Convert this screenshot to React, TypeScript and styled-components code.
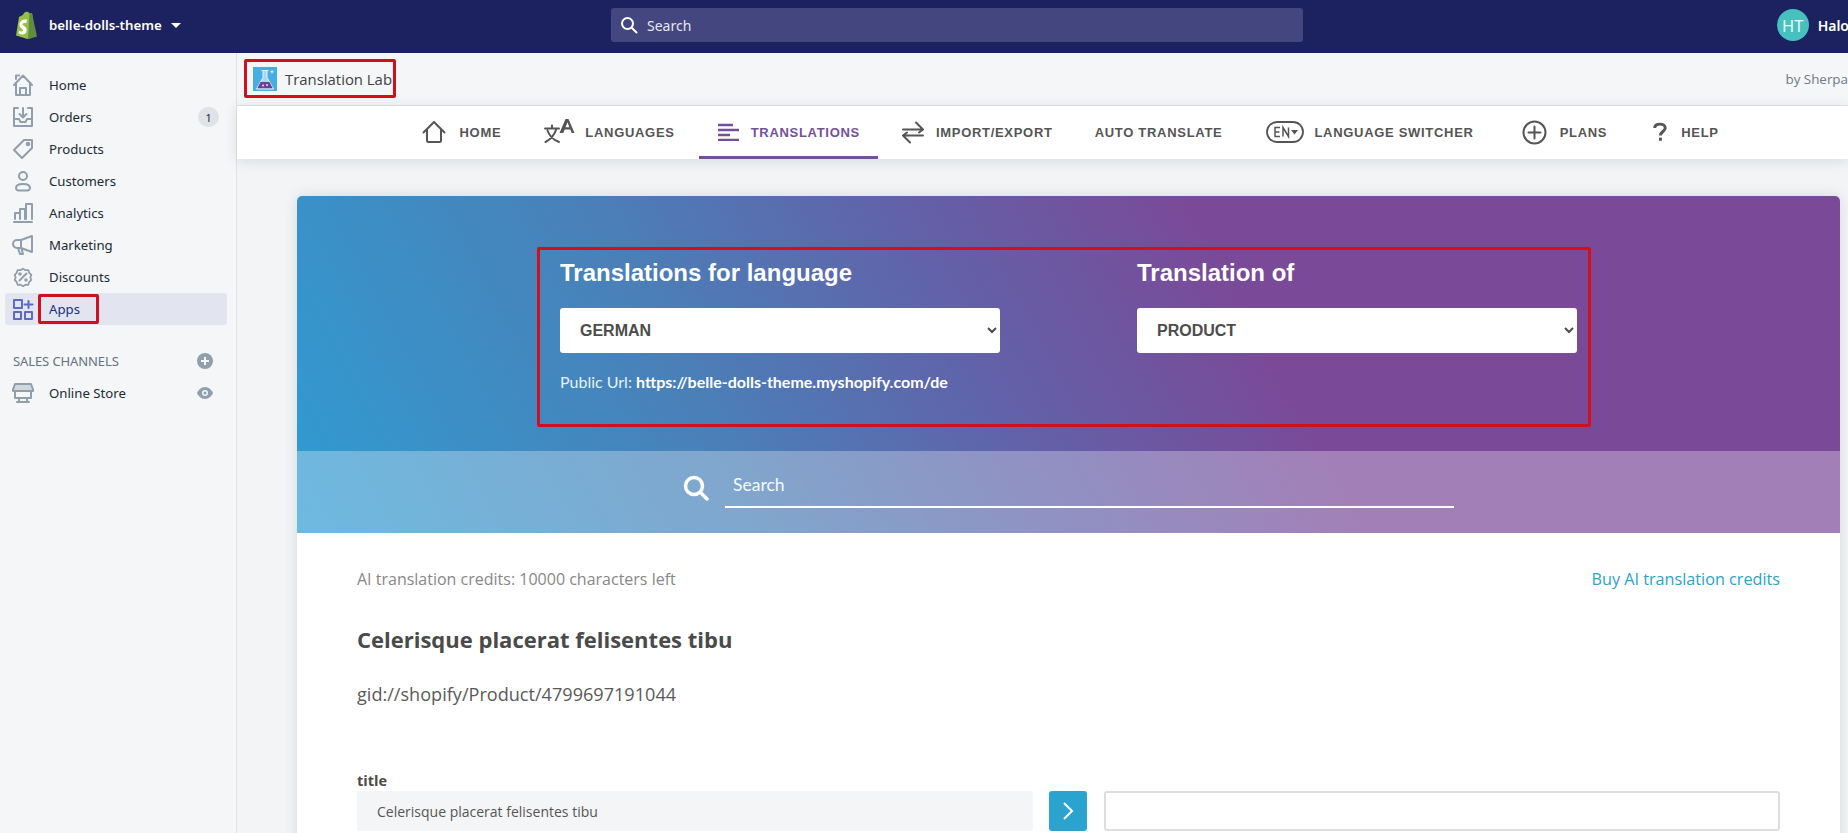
import React from 'react'
import styled, { createGlobalStyle } from 'styled-components'

const GlobalStyle = createGlobalStyle`
  html, body {
    margin: 0;
    height: 100%;
    overflow: hidden;
    background: #f4f6f8;
    font-family: 'Noto Sans', 'Open Sans', Arial, sans-serif;
  }
  * { box-sizing: border-box; }
`

const Page = styled.div`
  width: 1848px;
  height: 833px;
  display: flex;
  flex-direction: column;
  overflow: hidden;
`

const TopBar = styled.header`
  flex: none;
  height: 53px;
  padding-bottom: 3px;
  background: #1c2260;
  display: grid;
  grid-template-columns: 611px 692px 1fr;
  align-items: center;
  color: #fff;
`

const StoreSwitcher = styled.div`
  display: flex;
  align-items: center;
  padding-left: 13px;
  font-size: 13.3px;
  font-weight: 600;
`

const StoreName = styled.span`
  margin-left: 11px;
`

const Caret = styled.span`
  margin-left: 9px;
  width: 0;
  height: 0;
  border-left: 5px solid transparent;
  border-right: 5px solid transparent;
  border-top: 5px solid #fff;
`

const TopSearch = styled.div`
  height: 34px;
  background: #43467f;
  border-radius: 3px;
  display: flex;
  align-items: center;
  padding-left: 9px;
  gap: 7px;
  color: #fff;
`

const TopSearchInput = styled.input`
  flex: 1;
  background: transparent;
  border: 0;
  outline: 0;
  color: #fff;
  font: 14px 'Noto Sans', sans-serif;
  &::placeholder { color: #e6e7f0; opacity: 1; }
`

const Account = styled.div`
  display: flex;
  align-items: center;
  justify-content: flex-end;
  gap: 9px;
  font-size: 14px;
  font-weight: 600;
  margin-right: -1px;
`

const Avatar = styled.div`
  width: 32px;
  height: 32px;
  border-radius: 50%;
  background: #47c1bf;
  color: #e8fbfa;
  display: flex;
  align-items: center;
  justify-content: center;
  font-size: 16.5px;
  font-weight: 400;
`

const Body = styled.div`
  flex: 1;
  display: flex;
  min-height: 0;
`

const Sidebar = styled.aside`
  flex: none;
  width: 237px;
  border-right: 1px solid #dfe3e8;
  background: #f4f6f8;
  padding: 16px 9px 0 5px;
`

const NavRow = styled.div<{ $active?: boolean }>`
  height: 32px;
  display: flex;
  align-items: center;
  padding-left: 7px;
  border-radius: 3px;
  font-size: 13.2px;
  color: ${({ $active }) => ($active ? '#202e78' : '#212b36')};
  background: ${({ $active }) => ($active ? '#e2e5f0' : 'transparent')};
  svg { flex: none; color: ${({ $active }) => ($active ? '#5c6ac4' : '#919eab')}; }
`

const NavLabel = styled.span`
  margin-left: 15px;
  flex: 1;
`

const Badge = styled.span`
  width: 21px;
  height: 20px;
  margin-right: 8px;
  border-radius: 10px;
  background: #dfe3e8;
  font-size: 11.5px;
  display: flex;
  align-items: center;
  justify-content: center;
`

const ChannelsHeading = styled.div`
  height: 32px;
  margin-top: 20px;
  padding: 0 14px 0 8px;
  display: flex;
  align-items: center;
  justify-content: space-between;
  font-size: 13px;
  letter-spacing: -0.1px;
  color: #637381;
  svg { color: #919eab; }
`

const RowEnd = styled.span`
  margin-right: 14px;
  display: flex;
  svg { color: #919eab; }
`

const Main = styled.main`
  flex: 1;
  min-width: 0;
  display: flex;
  flex-direction: column;
  background: #f2f4f6;
`

const AppTitleBar = styled.div`
  flex: none;
  height: 53px;
  background: #f4f6f8;
  border-bottom: 1px solid #dfe3e8;
  display: flex;
  align-items: center;
  justify-content: space-between;
  padding-left: 16px;
  font-family: 'Open Sans', sans-serif;
`

const AppName = styled.div`
  display: flex;
  align-items: center;
  gap: 8px;
  font-size: 14.9px;
  color: #3d4349;
`

const ByLine = styled.div`
  font-size: 13.4px;
  color: #6f7a85;
  margin-bottom: 1px;
`

const TabBar = styled.nav`
  flex: none;
  height: 53px;
  background: #fff;
  display: flex;
  align-items: stretch;
  gap: 5px;
  padding-left: 165px;
  box-shadow: 0 2px 12px rgba(60, 70, 80, 0.14);
  position: relative;
`

const Tab = styled.div<{ $active?: boolean; $gap?: number; $lead?: number }>`
  display: flex;
  align-items: center;
  gap: ${({ $gap }) => $gap ?? 12}px;
  margin-left: ${({ $lead }) => $lead ?? 0}px;
  padding: 2px 18.5px 0;
  font-family: 'Liberation Sans', Arial, sans-serif;
  font-size: 13px;
  font-weight: 700;
  letter-spacing: 0.7px;
  white-space: nowrap;
  color: ${({ $active }) => ($active ? '#73519a' : '#555')};
  border-bottom: 3px solid ${({ $active }) => ($active ? '#73519a' : 'transparent')};
`

const Scroll = styled.div`
  flex: 1;
  min-height: 0;
  padding: 37px 8px 0 60px;
  overflow: hidden;
`

const Card = styled.section`
  background: #fff;
  border-radius: 5px 5px 0 0;
  box-shadow: 0 0 14px rgba(60, 70, 80, 0.14);
  height: 700px;
  overflow: hidden;
`

const Banner = styled.div`
  background: linear-gradient(62deg, #2f9cd2 0%, #4a80b8 27%, #6360a8 46%, #7a4a98 62%, #7a4a98 100%);
`

const Hero = styled.div`
  height: 255px;
  padding-top: 61px;
  display: flex;
  justify-content: center;
`

const HeroGrid = styled.div`
  width: 1017px;
  display: grid;
  grid-template-columns: 440px 440px;
  justify-content: space-between;
  align-content: start;
`

const HeroField = styled.div`
  display: flex;
  flex-direction: column;
`

const HeroLabel = styled.h2`
  margin: 0 0 19px;
  font: 700 24px/32px 'Liberation Sans', Arial, sans-serif;
  color: #fff;
`

const HeroSelect = styled.select`
  height: 45px;
  width: 100%;
  border: 0;
  border-radius: 3px;
  background: #fff;
  padding-left: 16px;
  font: 700 16px 'Liberation Sans', Arial, sans-serif;
  color: #4c4c4c;
`

const PublicUrl = styled.p`
  margin: 19px 0 0;
  font: 16px/20px Lato, sans-serif;
  color: #e4f1fa;
  strong { color: #fff; font-weight: 700; }
`

const SearchStrip = styled.div`
  height: 82px;
  background: rgba(255, 255, 255, 0.3);
  display: flex;
  justify-content: center;
  padding-top: 17px;
`

const SearchGroup = styled.div`
  width: 771px;
  display: flex;
  align-items: flex-start;
  gap: 16px;
  color: #fff;
  svg { margin-top: 7px; flex: none; }
`

const SearchField = styled.input`
  flex: 1;
  height: 40px;
  background: transparent;
  border: 0;
  border-bottom: 2px solid #fff;
  outline: 0;
  padding: 0 8px 6px;
  color: #fff;
  font: 17.5px Lato, sans-serif;
  &::placeholder { color: #f4f9fc; opacity: 1; }
`

const CardBody = styled.div`
  padding: 35px 60px 0;
  font-family: 'Open Sans', sans-serif;
`

const CreditsRow = styled.div`
  display: flex;
  justify-content: space-between;
  align-items: center;
  height: 22px;
  font-size: 16px;
  color: #888;
`

const BuyLink = styled.a`
  font-size: 16.2px;
  color: #2ba3c9;
`

const ProductTitle = styled.h3`
  margin: 34px 0 0;
  font-size: 22px;
  line-height: 30px;
  font-weight: 700;
  color: #4a4a4a;
`

const ProductId = styled.div`
  margin-top: 28px;
  font-size: 18.1px;
  line-height: 24px;
  color: #5a5a5a;
`

const FieldLabel = styled.div`
  margin-top: 65px;
  font-size: 14.5px;
  line-height: 20px;
  font-weight: 700;
  color: #4a4a4a;
`

const FieldRow = styled.div`
  display: grid;
  grid-template-columns: 676px 38px 1fr;
  column-gap: 16px;
  align-items: stretch;
  height: 40px;
`

const SourceBox = styled.div`
  background: #f4f5f7;
  border-radius: 3px;
  padding-left: 20px;
  display: flex;
  align-items: center;
  font-size: 14px;
  color: #555;
`

const CopyButton = styled.button`
  border: 0;
  border-radius: 3px;
  background: #2ba3cf;
  color: #fff;
  padding: 0;
  display: flex;
  align-items: center;
  justify-content: center;
`

const TargetInput = styled.input`
  margin-left: 1px;
  border: 2px solid #dedede;
  border-radius: 3px;
  background: #fff;
  outline: 0;
`

type BoxProps = { $x: number; $y: number; $w: number; $h: number }

const Annotation = styled.div<BoxProps>`
  position: absolute;
  border: 3px solid #d0101c;
  border-radius: 2px;
  pointer-events: none;
  z-index: 5;
  left: ${({ $x }) => $x}px;
  top: ${({ $y }) => $y}px;
  width: ${({ $w }) => $w}px;
  height: ${({ $h }) => $h}px;
`

const line = { fill: 'none', stroke: 'currentColor', strokeWidth: 2, strokeLinecap: 'round', strokeLinejoin: 'round' } as const

const ShopifyLogo = () => (
  <svg width="25" height="29" viewBox="0 0 25 29">
    <path d="M3 24.5 6 6c2-1 3-1.600 4-2.200C11 1.500 12.500 .5 14 .8c1.200.2 2 .9 2.500 1.600l2.500-.2L22.500 25l-8 3z" fill="#95bf47" />
    <path d="M16.500 2.400 19 2.200 24 25.500l-9 2.700z" fill="#5e8e3e" />
    <path d="M14 9.600l-.8 2.700s-1-.5-2.100-.4c-1.700.1-1.700 1.100-1.700 1.400.1 1.500 4.100 1.800 4.300 5.300.2 2.800-1.500 4.700-3.800 4.800-2.800.2-4.400-1.500-4.400-1.500l.6-2.500s1.500 1.200 2.800 1.100c.8 0 1.100-.7 1.100-1.200-.1-2-3.400-1.900-3.600-5.100-.2-2.700 1.600-5.500 5.500-5.700 1.400-.1 2.100.1 2.100.1z" fill="#fff" />
  </svg>
)

const LabLogo = () => (
  <svg width="24" height="24" viewBox="0 0 24 24">
    <rect width="24" height="24" fill="#45aee2" />
    <path d="M8.500 3.500h7M10 3.500v7L3.500 22h17L14 10.500v-7" fill="#a9d6f0" stroke="#e8f4fb" strokeWidth="1" />
    <path d="M7.500 15h9l3.200 6.300H4.300z" fill="#6f3f97" />
    <path d="M19 3v3.500M17.300 4.800h3.400" stroke="#fff" strokeWidth="0.8" />
    <circle cx="10" cy="18.500" r="1" fill="#e8d8f0" />
    <circle cx="14" cy="18" r="1" fill="#e8d8f0" />
  </svg>
)

const SearchGlyph = () => (
  <svg width="18" height="18" viewBox="0 0 18 18" {...line}>
    <circle cx="7.500" cy="7.500" r="5.500" />
    <path d="M12 12l4.500 4.500" />
  </svg>
)

const HomeIcon = () => (
  <svg width="22" height="24" viewBox="0 0 22 24" {...line}>
    <path d="M2 12 11 2.500 20 12M4 10v12h14V10M8 22v-7h6v7M4 6V2.500h3" />
  </svg>
)
const OrdersIcon = () => (
  <svg width="22" height="22" viewBox="0 0 22 22" {...line}>
    <path d="M6 2H2v18h18V2h-4M2 13h5l1.500 3h5l1.500-3h5M11 2v9M7.500 8l3.500 3.500L14.500 8" />
  </svg>
)
const ProductsIcon = () => (
  <svg width="22" height="22" viewBox="0 0 22 22" {...line}>
    <path d="M2 12 12 2h8v8L10 20z" />
    <circle cx="16" cy="6" r="1.300" />
  </svg>
)
const CustomersIcon = () => (
  <svg width="22" height="22" viewBox="0 0 22 22" {...line}>
    <circle cx="11" cy="6" r="4" />
    <path d="M4 18c0-3 3-4 7-4s7 1 7 4-3 2.500-7 2.500-7 .5-7-2.500z" />
  </svg>
)
const AnalyticsIcon = () => (
  <svg width="22" height="22" viewBox="0 0 22 22" {...line}>
    <path d="M2 20h18M3 17v-6h5v6M8 17V7h5v10M14 17V2h6v15" />
  </svg>
)
const MarketingIcon = () => (
  <svg width="22" height="22" viewBox="0 0 22 22" {...line}>
    <path d="M20 2v16L9 14H5a3.500 3.500 0 0 1 0-8h4zM9 6v8M6 14l2 6h3l-1.500-5.500" />
  </svg>
)
const DiscountsIcon = () => (
  <svg width="22" height="22" viewBox="0 0 22 22" {...line}>
    <path d="M11 1.500l2.800 1.800 3.300-.2 1 3.200 2.400 2.300-1.200 2.900 1.200 2.900-2.400 2.300-1 3.200-3.300-.2-2.800 1.800-2.800-1.800-3.300.2-1-3.200-2.400-2.300 1.200-2.900-1.200-2.900 2.400-2.300 1-3.200 3.300.2z" transform="translate(1.300 1.300) scale(.88)" />
    <path d="M7.500 14.500l7-7" />
    <circle cx="8" cy="8" r=".8" />
    <circle cx="14" cy="14" r=".8" />
  </svg>
)
const AppsIcon = () => (
  <svg width="22" height="22" viewBox="0 0 22 22" {...line}>
    <path d="M2 2h8v8H2zM2 14h7v7H2zM13 14h7v7h-7zM16.500 3v7M12.500 6.500h8" />
  </svg>
)
const StoreIcon = () => (
  <svg width="22" height="22" viewBox="0 0 22 22" {...line}>
    <path d="M3 2h16l2 5.500v1.500H1V7.500zM3 9v7h16V9M7 16v4M15 16v4M5 20h12" />
    <path d="M3 2h16l2 6H1z" fill="currentColor" fillOpacity=".35" stroke="none" />
  </svg>
)
const PlusCircle = () => (
  <svg width="16" height="16" viewBox="0 0 16 16">
    <circle cx="8" cy="8" r="8" fill="currentColor" />
    <path d="M8 4v8M4 8h8" stroke="#f4f6f8" strokeWidth="2" />
  </svg>
)
const EyeIcon = () => (
  <svg width="16" height="12" viewBox="0 0 16 12">
    <path d="M8 0c4 0 7 3.500 8 6-1 2.500-4 6-8 6S1 8.500 0 6c1-2.500 4-6 8-6z" fill="currentColor" />
    <circle cx="8" cy="6" r="3" fill="#f4f6f8" />
    <circle cx="8" cy="6" r="1.500" fill="currentColor" />
  </svg>
)

const TabHome = () => (
  <svg width="24" height="24" viewBox="0 0 24 24" {...line}>
    <path d="M1.500 12.500 12 2l10.500 10.500M5 10v10.500a1.500 1.500 0 0 0 1.500 1.500h11a1.500 1.500 0 0 0 1.500-1.500V10" />
  </svg>
)
const TabLanguages = () => (
  <svg width="32" height="26" viewBox="0 0 32 26">
    <path d="M1 9.500h14M8 6.500v3M12.500 9.500C11 15 7 20 1.500 23M3.500 11.500C5.500 17 9.500 21 15 23" {...line} />
    <path d="M15.500 14 21.500 0h3l6 14h-2.800l-1.400-3.500h-5.600L19.300 14zM21.500 8.300h3.900L23.500 3.300z" fill="currentColor" />
  </svg>
)
const TabTranslations = () => (
  <svg width="21" height="18" viewBox="0 0 21 18" stroke="currentColor" strokeWidth="2.400">
    <path d="M0 2h15M0 7h21M0 12h12M0 17h21" />
  </svg>
)
const TabTransfer = () => (
  <svg width="22" height="23" viewBox="0 0 22 23" {...line}>
    <path d="M1 8.500h20M14 1.500l7 7-4 3M21 14.500H1M8 21.500l-7-7 4-3" />
  </svg>
)
const TabSwitcher = () => (
  <svg width="38" height="22" viewBox="0 0 38 22">
    <rect x="1" y="1" width="36" height="20" rx="10" fill="none" stroke="currentColor" strokeWidth="1.800" />
    <path d="M14 6.500H9v9h5M9 11h4.500M17 15.500v-9l5.500 9v-9" fill="none" stroke="currentColor" strokeWidth="1.500" />
    <path d="M25 9h7l-3.500 4.500z" fill="currentColor" />
  </svg>
)
const TabPlans = () => (
  <svg width="25" height="25" viewBox="0 0 25 25" {...line}>
    <circle cx="12.500" cy="12.500" r="11" />
    <path d="M12.500 6.500v12M6.500 12.500h12" />
  </svg>
)
const TabHelp = () => (
  <svg width="14" height="20" viewBox="0 0 16 22" fill="none" stroke="currentColor" strokeWidth="3.400">
    <path d="M2 6.500C2 3.500 4.500 2 8 2s6 1.700 6 4.500c0 4-5.500 4-5.500 8.500" />
    <path d="M8.500 17.500V21" />
  </svg>
)

const sideItems = [
  { label: 'Home', icon: <HomeIcon /> },
  { label: 'Orders', icon: <OrdersIcon />, badge: '1' },
  { label: 'Products', icon: <ProductsIcon /> },
  { label: 'Customers', icon: <CustomersIcon /> },
  { label: 'Analytics', icon: <AnalyticsIcon /> },
  { label: 'Marketing', icon: <MarketingIcon /> },
  { label: 'Discounts', icon: <DiscountsIcon /> },
  { label: 'Apps', icon: <AppsIcon />, active: true },
]

const tabs = [
  { label: 'HOME', icon: <TabHome />, gap: 14, lead: 1 },
  { label: 'LANGUAGES', icon: <TabLanguages />, gap: 9, lead: 1 },
  { label: 'TRANSLATIONS', icon: <TabTranslations />, active: true, lead: 1 },
  { label: 'IMPORT/EXPORT', icon: <TabTransfer />, gap: 12 },
  { label: 'AUTO TRANSLATE' },
  { label: 'LANGUAGE SWITCHER', icon: <TabSwitcher />, gap: 10, lead: 2 },
  { label: 'PLANS', icon: <TabPlans />, gap: 13, lead: 6 },
  { label: 'HELP', icon: <TabHelp />, gap: 14, lead: 4 },
]

export default function App() {
  return (
    <>
      <GlobalStyle />
      <Page>
        <TopBar>
          <StoreSwitcher>
            <ShopifyLogo />
            <StoreName>belle-dolls-theme</StoreName>
            <Caret />
          </StoreSwitcher>
          <TopSearch>
            <SearchGlyph />
            <TopSearchInput placeholder="Search" readOnly />
          </TopSearch>
          <Account>
            <Avatar>HT</Avatar>
            <span>Halo</span>
          </Account>
        </TopBar>
        <Body>
          <Sidebar>
            {sideItems.map((item) => (
              <NavRow key={item.label} $active={item.active}>
                {item.icon}
                <NavLabel>{item.label}</NavLabel>
                {item.badge && <Badge>{item.badge}</Badge>}
              </NavRow>
            ))}
            <ChannelsHeading>
              <span>SALES CHANNELS</span>
              <PlusCircle />
            </ChannelsHeading>
            <NavRow>
              <StoreIcon />
              <NavLabel>Online Store</NavLabel>
              <RowEnd>
                <EyeIcon />
              </RowEnd>
            </NavRow>
          </Sidebar>
          <Main>
            <AppTitleBar>
              <AppName>
                <LabLogo />
                Translation Lab
              </AppName>
              <ByLine>by Sherpa</ByLine>
            </AppTitleBar>
            <TabBar>
              {tabs.map((tab) => (
                <Tab key={tab.label} $active={tab.active} $gap={tab.gap} $lead={tab.lead}>
                  {tab.icon}
                  {tab.label}
                </Tab>
              ))}
            </TabBar>
            <Scroll>
              <Card>
                <Banner>
                  <Hero>
                    <HeroGrid>
                      <HeroField>
                        <HeroLabel>Translations for language</HeroLabel>
                        <HeroSelect defaultValue="GERMAN">
                          <option>GERMAN</option>
                        </HeroSelect>
                        <PublicUrl>
                          Public Url: <strong>https://belle-dolls-theme.myshopify.com/de</strong>
                        </PublicUrl>
                      </HeroField>
                      <HeroField>
                        <HeroLabel>Translation of</HeroLabel>
                        <HeroSelect defaultValue="PRODUCT">
                          <option>PRODUCT</option>
                        </HeroSelect>
                      </HeroField>
                    </HeroGrid>
                  </Hero>
                  <SearchStrip>
                    <SearchGroup>
                      <svg width="26" height="26" viewBox="0 0 26 26" fill="none" stroke="currentColor" strokeWidth="3.500" strokeLinecap="round">
                        <circle cx="11" cy="11" r="8.500" />
                        <path d="M17.500 17.500 24 24" />
                      </svg>
                      <SearchField placeholder="Search" readOnly />
                    </SearchGroup>
                  </SearchStrip>
                </Banner>
                <CardBody>
                  <CreditsRow>
                    <span>AI translation credits: 10000 characters left</span>
                    <BuyLink>Buy AI translation credits</BuyLink>
                  </CreditsRow>
                  <ProductTitle>Celerisque placerat felisentes tibu</ProductTitle>
                  <ProductId>gid://shopify/Product/4799697191044</ProductId>
                  <FieldLabel>title</FieldLabel>
                  <FieldRow>
                    <SourceBox>Celerisque placerat felisentes tibu</SourceBox>
                    <CopyButton>
                      <svg width="12" height="20" viewBox="0 0 12 20" fill="none" stroke="currentColor" strokeWidth="2">
                        <path d="M2 2l8 8-8 8" />
                      </svg>
                    </CopyButton>
                    <TargetInput readOnly />
                  </FieldRow>
                </CardBody>
              </Card>
            </Scroll>
          </Main>
        </Body>
        <Annotation $x={244} $y={59} $w={152} $h={39} />
        <Annotation $x={38} $y={294} $w={61} $h={30} />
        <Annotation $x={537} $y={247} $w={1054} $h={180} />
      </Page>
    </>
  )
}
